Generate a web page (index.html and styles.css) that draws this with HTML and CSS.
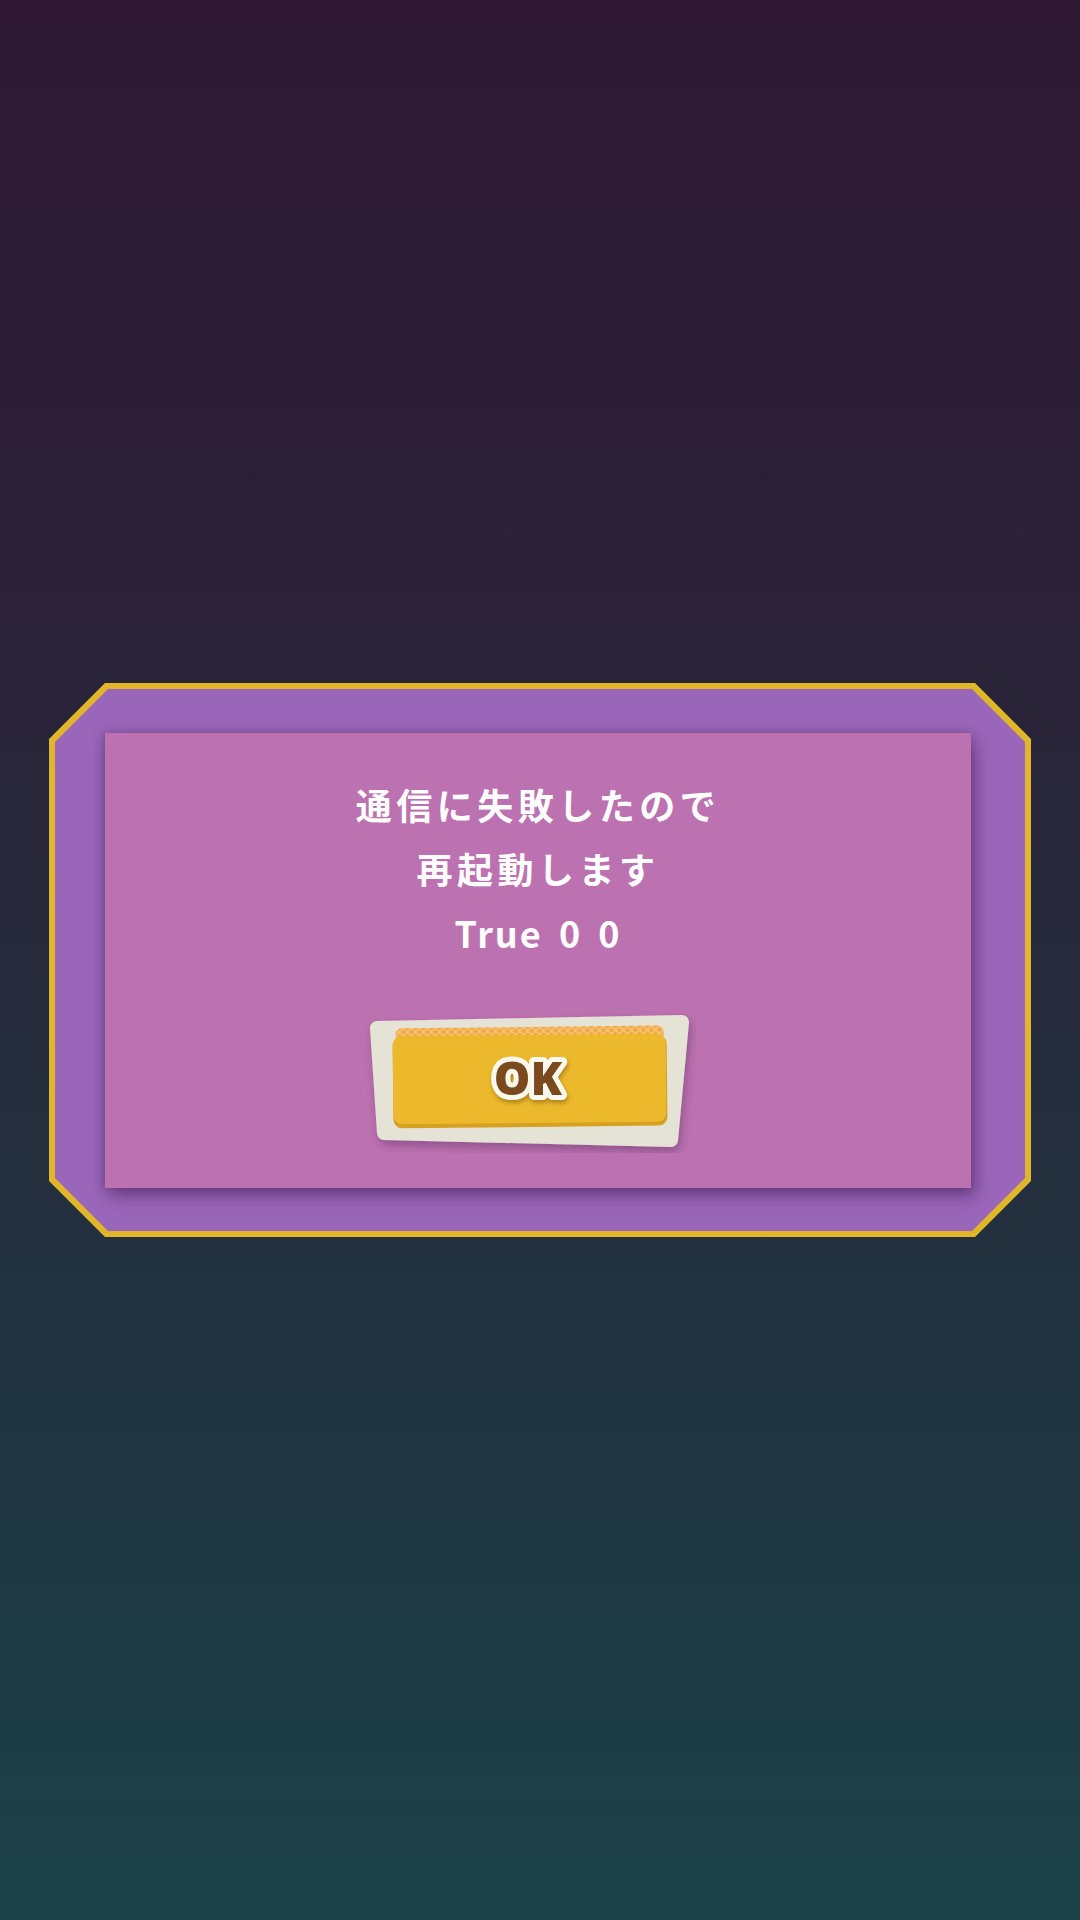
FILE: index.html
```html
<!DOCTYPE html>
<html lang="ja">
<head>
    <meta charset="UTF-8">
    <meta name="viewport" content="width=1080, initial-scale=1.0">
    <title>通信エラー</title>
    <link rel="stylesheet" href="styles.css">
</head>
<body>
    <main class="screen">
        <div class="frame">
            <div class="frameInner">
                <div class="panel">
                    <div class="message">
                        <p>通信に失敗したので</p>
                        <p>再起動します</p>
                        <p class="status">True 0 0</p>
                    </div>
                    <div class="buttonRow">
                        <button class="okButton" aria-label="OK">
                            <svg width="340" height="150" viewBox="0 0 340 150">
                                <defs>
                                    <pattern id="wafer" width="8" height="8" patternUnits="userSpaceOnUse">
                                        <rect width="8" height="8" fill="#f2a646"/>
                                        <path d="M0 0 L8 8 M8 0 L0 8" stroke="#f7c978" stroke-width="1.4"/>
                                    </pattern>
                                    <filter id="plateShadow" x="-10%" y="-10%" width="120%" height="130%">
                                        <feDropShadow dx="2" dy="5" stdDeviation="5" flood-color="#5a2a60" flood-opacity="0.45"/>
                                    </filter>
                                </defs>
                                <!-- paper plate -->
                                <path d="M21 25 L326 19 L315 137 L28 130 Z" fill="#e5e2d6" stroke="#e5e2d6" stroke-width="14" stroke-linejoin="round" filter="url(#plateShadow)"/>
                                <g transform="rotate(-0.6 170 75)">
                                    <!-- wafer strip -->
                                    <rect x="40" y="24" width="268" height="16" rx="6" fill="url(#wafer)"/>
                                    <!-- felt -->
                                    <rect x="37" y="33" width="274" height="91" rx="9" fill="#d6a021"/>
                                    <rect x="37" y="32" width="273" height="88" rx="9" fill="#edb92c"/>
                                </g>
                                <text class="okLabel" x="172" y="92" text-anchor="middle">OK</text>
                            </svg>
                        </button>
                    </div>
                </div>
            </div>
        </div>
    </main>
</body>
</html>
```

FILE: styles.css
```css
* {
    margin: 0;
    padding: 0;
    box-sizing: border-box;
}
body {
    width: 1080px;
    height: 1920px;
    background: linear-gradient(to bottom, #2f1934 0%, #2b2137 30%, #262a3b 50%, #213440 72%, #1b4247 100%);
    font-family: "Noto Sans CJK JP", "Noto Sans", sans-serif;
}
.screen {
    display: flex;
    height: 1920px;
    justify-content: center;
    align-items: center;
}
.frame {
    width: 982px;
    height: 554px;
    padding: 6px;
    background-color: #e2b62a;
    clip-path: polygon(56px 0, calc(100% - 56px) 0, 100% 56px, 100% calc(100% - 56px), calc(100% - 56px) 100%, 56px 100%, 0 calc(100% - 56px), 0 56px);
}
.frameInner {
    width: 100%;
    height: 100%;
    padding: 44px 54px 43px 50px;
    background-color: #9a66b9;
    clip-path: polygon(53px 0, calc(100% - 53px) 0, 100% 53px, 100% calc(100% - 53px), calc(100% - 53px) 100%, 53px 100%, 0 calc(100% - 53px), 0 53px);
}
.panel {
    display: flex;
    flex-direction: column;
    align-items: center;
    width: 100%;
    height: 100%;
    padding-top: 39px;
    background-color: #bc72b0;
    box-shadow: 4px 8px 16px rgba(70, 30, 90, 0.55), -2px 0 8px rgba(70, 30, 90, 0.3);
}
.message {
    color: #ffffff;
    font-size: 36px;
    font-weight: 700;
    line-height: 64px;
    letter-spacing: 4.5px;
    text-align: center;
}
.message .status {
    letter-spacing: 2px;
    word-spacing: 6px;
}
.buttonRow {
    display: flex;
    justify-content: center;
    width: 100%;
    margin-top: 39px;
    padding-right: 24px;
}
.okButton {
    display: block;
    width: 340px;
    height: 150px;
    border: none;
    background: none;
    outline: none;
}
.okButton svg {
    display: block;
}
.okLabel {
    font-family: "Noto Sans", "DejaVu Sans", sans-serif;
    font-size: 46px;
    font-weight: 900;
    fill: #7a4a1e;
    stroke: #fbf8ee;
    stroke-width: 10px;
    stroke-linejoin: round;
    paint-order: stroke;
    filter: drop-shadow(1px 3px 2px rgba(120, 80, 10, 0.5));
}
```
